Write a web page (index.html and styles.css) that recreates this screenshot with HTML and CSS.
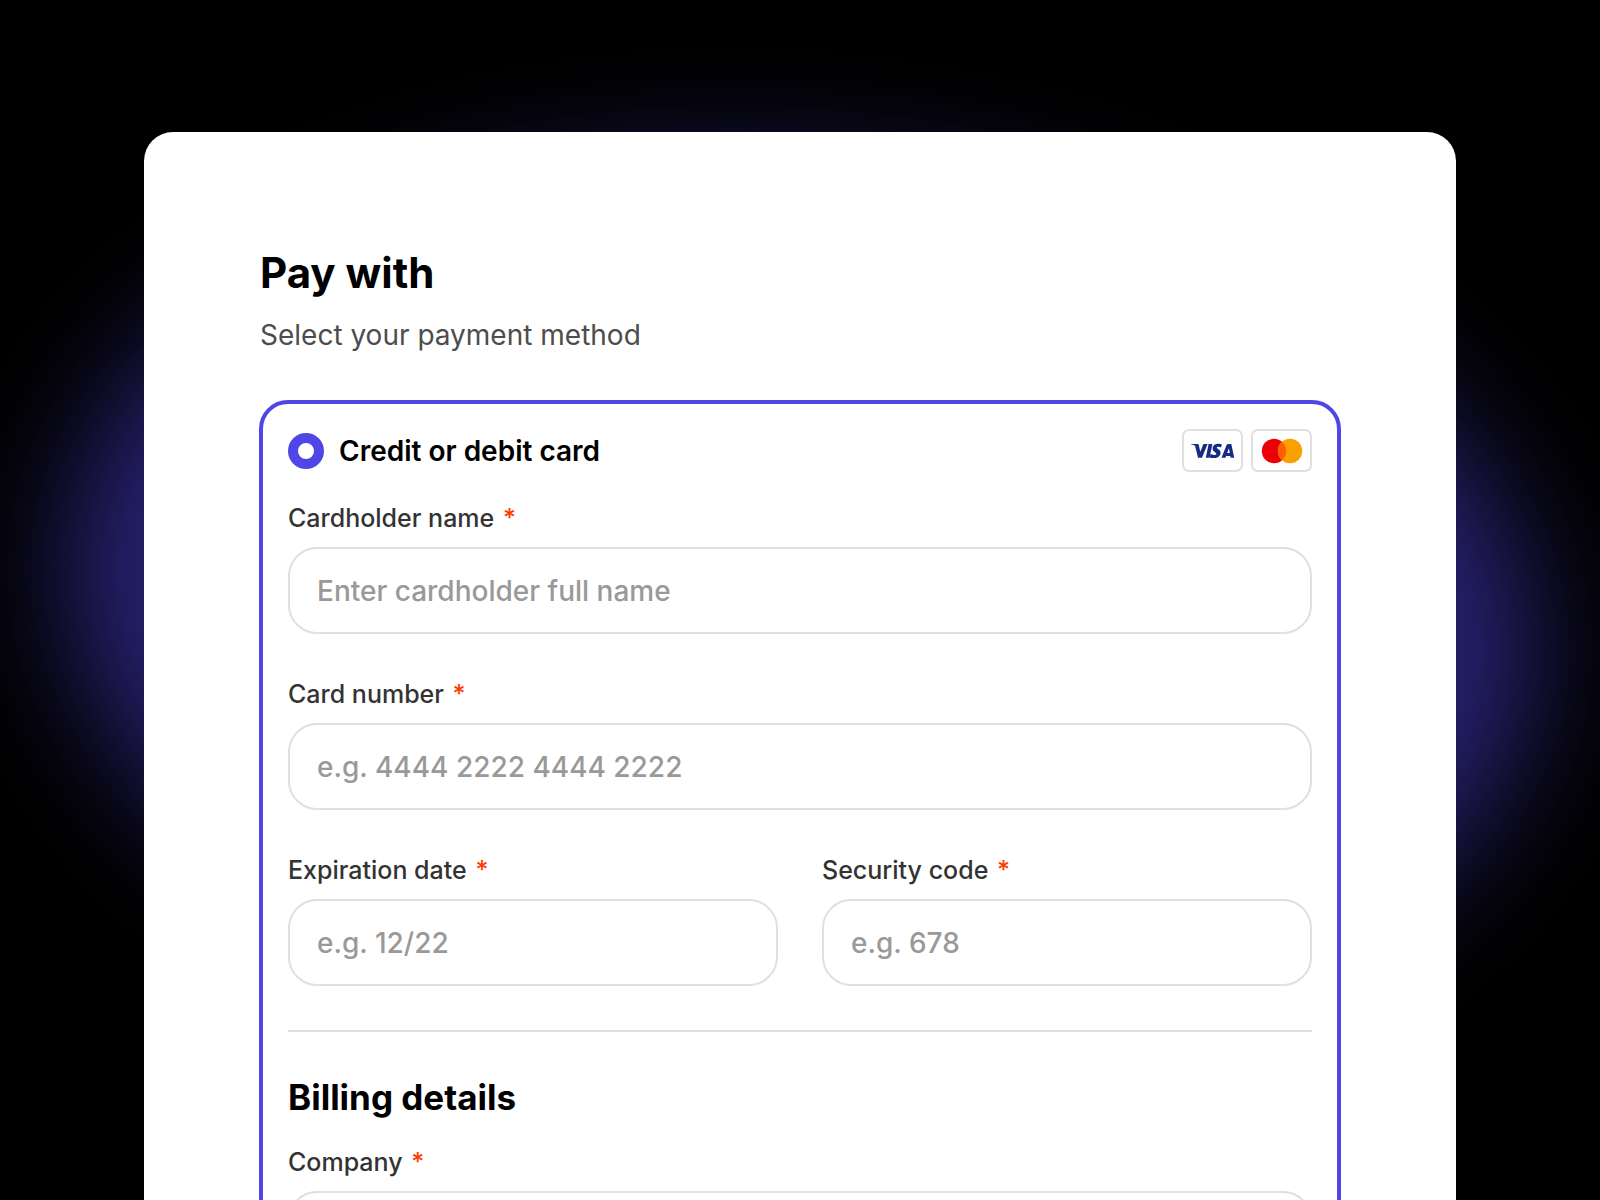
FILE: index.html
```html
<!DOCTYPE html>
<html lang="en">
<head>
<meta charset="utf-8">
<meta name="viewport" content="width=device-width, initial-scale=1">
<title>Pay with</title>
<link rel="stylesheet" href="styles.css">
</head>
<body>
<main class="checkout">
  <header class="intro">
    <h1 class="title">Pay with</h1>
    <p class="subtitle">Select your payment method</p>
  </header>
  <form class="method">
    <div class="method-head">
      <label class="choice" for="method-card">
        <input class="radio" type="radio" id="method-card" name="method" checked>
        <span>Credit or debit card</span>
      </label>
      <div class="brands">
        <span class="brand">
          <svg width="44" height="16" viewBox="0 0 44 16" role="img" aria-label="Visa">
            <g fill="#172b85">
              <path d="M0 1.4C.2 1 .5 1 1 1H6.100C7.100 1 7.700 1.500 7.900 2.400L9.300 8.700 12.400 1H16.600L11 14.800H7L4.400 4.300C4.200 3 3.600 2.500 2.600 2.100 1.700 1.800.8 1.600 0 1.400Z"/>
              <path d="M17.600 1H21.400L18.600 14.800H14.800Z"/>
              <path d="M30.800 1.300 30.100 4.500C28.700 3.800 25.900 3.400 25.800 4.700 25.800 6.100 29.900 6.300 29.600 9.900 29.300 13.700 25.600 15.200 22.300 15.100 20.700 15.100 19.500 14.700 18.800 14.400L19.500 11.100C21.400 12.100 25.100 12.400 25.300 10.900 25.500 9.200 21.400 9 21.600 5.300 21.800 1 27.200-.1 30.800 1.300Z"/>
              <path fill-rule="evenodd" d="M37.100 1H40.300L43.200 14.800H39.700L39.300 12.900H35.200L34.400 14.800H30.500L35.600 2C35.900 1.300 36.400 1 37.100 1ZM37.900 5.300 36.200 10H38.800Z"/>
            </g>
          </svg>
        </span>
        <span class="brand">
          <svg width="42" height="26" viewBox="0 0 42 26" role="img" aria-label="Mastercard">
            <circle cx="13" cy="13" r="12.200" fill="#eb0008"/>
            <circle cx="29" cy="13" r="12.200" fill="#f99f00"/>
            <path d="M21 3.800A12.200 12.200 0 0 1 21 22.200A12.200 12.200 0 0 1 21 3.800Z" fill="#ff5f00"/>
          </svg>
        </span>
      </div>
    </div>
    <div class="fields">
      <div class="field wide">
        <label class="label" for="name">Cardholder name <span class="required">*</span></label>
        <input class="input" id="name" type="text" placeholder="Enter cardholder full name">
      </div>
      <div class="field wide">
        <label class="label" for="number">Card number <span class="required">*</span></label>
        <input class="input" id="number" type="text" placeholder="e.g. 4444 2222 4444 2222">
      </div>
      <div class="field">
        <label class="label" for="expiry">Expiration date <span class="required">*</span></label>
        <input class="input" id="expiry" type="text" placeholder="e.g. 12/22">
      </div>
      <div class="field">
        <label class="label" for="code">Security code <span class="required">*</span></label>
        <input class="input" id="code" type="text" placeholder="e.g. 678">
      </div>
    </div>
    <hr class="rule">
    <section class="billing">
      <h2 class="section-title">Billing details</h2>
      <div class="field">
        <label class="label" for="company">Company <span class="required">*</span></label>
        <input class="input" id="company" type="text">
      </div>
    </section>
  </form>
</main>
</body>
</html>
```
FILE: styles.css
```css
* {
  box-sizing: border-box;
}

body {
  margin: 0;
  height: 100vh;
  overflow: hidden;
  background: #000;
  color: #000;
  font-family: Inter, "Liberation Sans", sans-serif;
}

/* Soft glow behind the sheet */
body::before {
  content: "";
  position: absolute;
  z-index: -1;
  top: 172px;
  left: 4%;
  right: 4%;
  height: 876px;
  border-radius: 50%;
  background: #282272;
  filter: blur(60px);
  transform: rotate(5deg);
}

.checkout {
  margin: 132px 9% 0;
  padding: 115px 115px 0;
  border-radius: 29px;
  background: #fff;
}

.intro {
  padding: 0 1px 45px;
}

.title {
  margin: 0;
  font-size: 42px;
  line-height: 52px;
  font-weight: 700;
}

.subtitle {
  margin: 16px 0 0;
  font-size: 28px;
  line-height: 40px;
  color: #4d4d4d;
}

.method {
  padding: 25px 25px 80px;
  border: 4px solid #5046e5;
  border-radius: 29px;
}

.method-head {
  display: flex;
  align-items: center;
  justify-content: space-between;
}

.choice {
  display: flex;
  align-items: center;
  gap: 15px;
  font-size: 28px;
  line-height: 40px;
  font-weight: 600;
}

.radio {
  appearance: none;
  width: 36px;
  height: 36px;
  margin: 0;
  border: 10px solid #5046e5;
  border-radius: 50%;
  background: #fff;
}

.brands {
  display: flex;
  gap: 8px;
}

.brand {
  display: flex;
  align-items: center;
  justify-content: center;
  width: 61px;
  height: 43px;
  border: 2px solid #e0e0e0;
  border-radius: 7px;
}

.fields {
  display: grid;
  grid-template-columns: 1fr 1fr;
  gap: 44px;
  margin-top: 30px;
}

.field {
  display: flex;
  flex-direction: column;
  gap: 13px;
}

.wide {
  grid-column: 1 / -1;
}

.label {
  font-size: 25px;
  line-height: 32px;
  font-weight: 500;
  color: #333;
}

.required {
  margin-left: 2px;
  color: #ff3b00;
}

.input {
  width: 100%;
  height: 87px;
  padding: 0 27px;
  border: 2px solid #e0e0e0;
  border-radius: 29px;
  background: #fff;
  color: #000;
  font: 500 28px/40px Inter, "Liberation Sans", sans-serif;
}

.input::placeholder {
  color: #999;
  opacity: 1;
}

.rule {
  height: 2px;
  margin: 44px 0;
  border: 0;
  background: #e0e0e0;
}

.section-title {
  margin: 0 0 28px;
  font-size: 35px;
  line-height: 42px;
  font-weight: 700;
}
```
